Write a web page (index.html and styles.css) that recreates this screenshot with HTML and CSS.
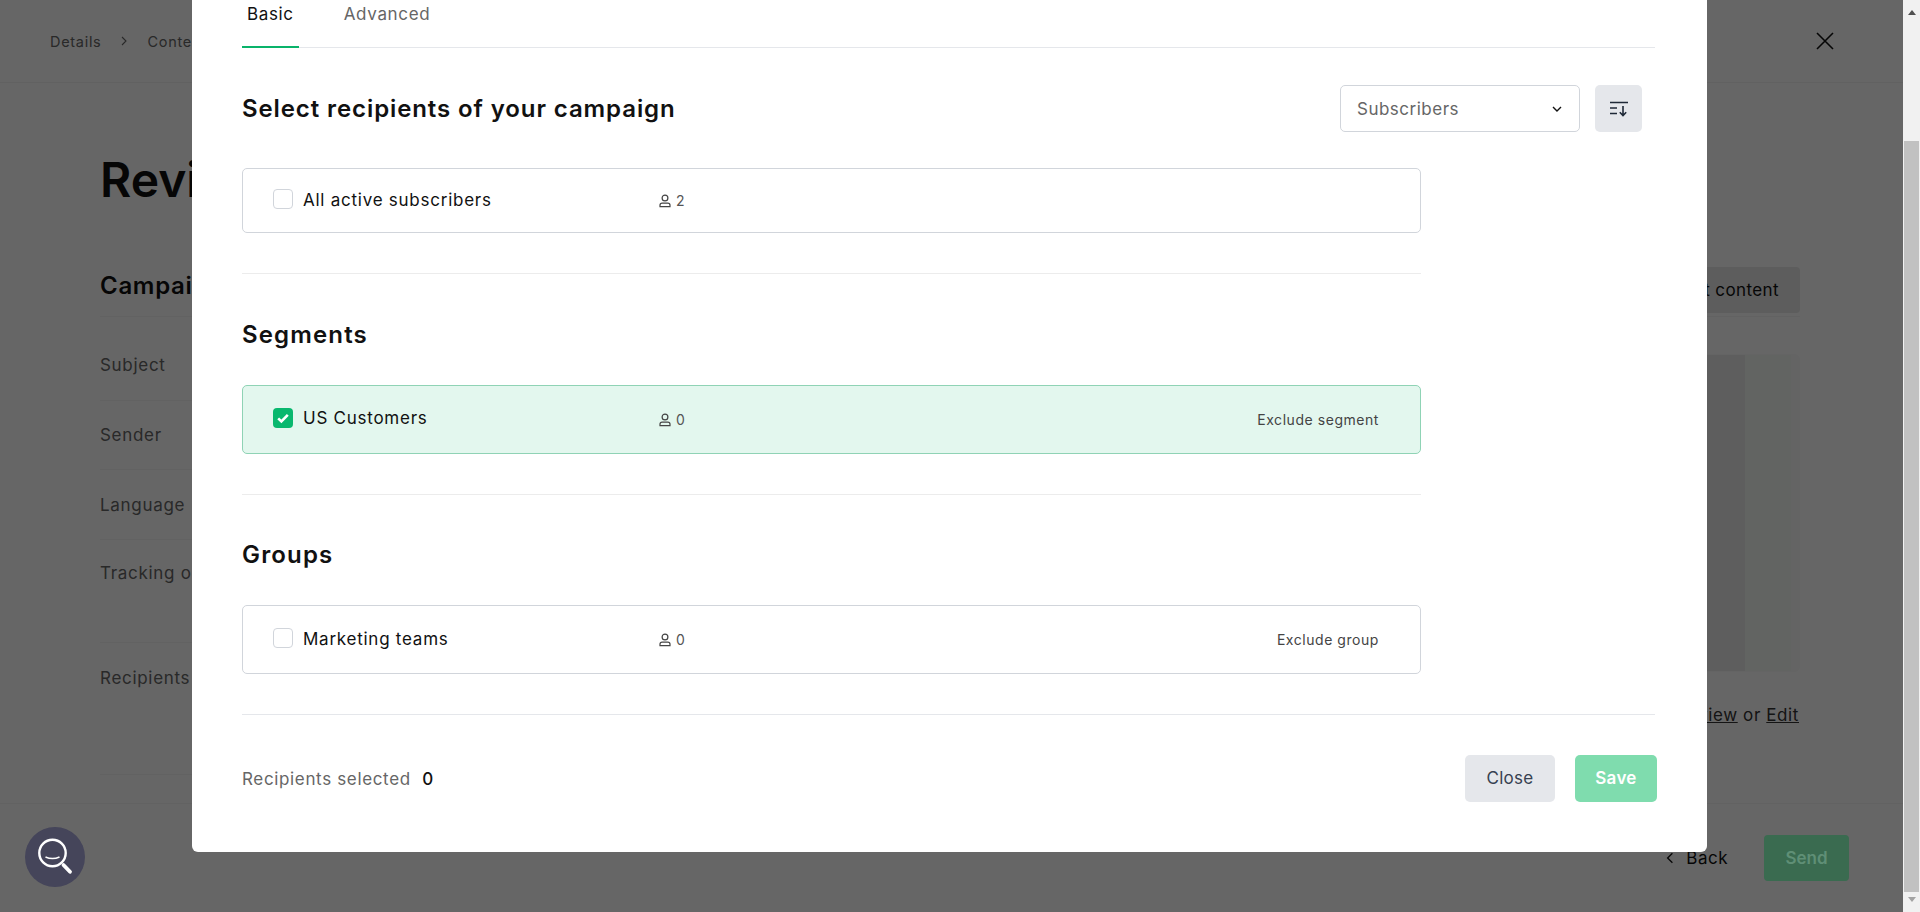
FILE: index.html
```html
<!DOCTYPE html>
<html lang="en">
<head>
<meta charset="utf-8">
<title>Review campaign</title>
<link rel="stylesheet" href="styles.css">
</head>
<body>
<div class="page">
  <header class="topbar">
    <nav class="crumbs"><span>Details</span>
      <svg class="crumb-sep" viewBox="0 0 10 10" width="10" height="10"><path d="M3 1l4 4-4 4" fill="none" stroke="currentColor" stroke-width="1.1"/></svg>
      <span>Content</span></nav>
    <svg class="close-x" viewBox="0 0 20 20" width="20" height="20"><path d="M2 2l16 16M18 2L2 18" fill="none" stroke="#111" stroke-width="1.6"/></svg>
  </header>
  <main class="main">
    <h1 class="title">Review</h1>
    <div class="campaign-head">
      <h2 class="campaign-title">Campaign</h2>
      <span class="edit-btn">Edit content</span>
    </div>
    <div class="review">
      <div class="rows">
        <div class="row r1">Subject</div>
        <div class="row r2">Sender</div>
        <div class="row r3">Language</div>
        <div class="row r4">Tracking options</div>
        <div class="row r5">Recipients</div>
      </div>
      <aside class="preview-col">
        <div class="preview"><div class="pv-a"></div><div class="pv-b"></div></div>
        <p class="preview-links"><u>Preview</u> or <u>Edit</u></p>
      </aside>
    </div>
  </main>
  <footer class="bottombar">
    <span class="back"><svg viewBox="0 0 10 10" width="12" height="12"><path d="M7 1L3 5l4 4" fill="none" stroke="currentColor" stroke-width="1.1"/></svg>Back</span>
    <span class="send">Send</span>
  </footer>
</div>

<div class="scrim"></div>

<section class="modal">
  <div class="tabs">
    <span class="tab active">Basic</span>
    <span class="tab">Advanced</span>
  </div>
  <div class="modal-head">
    <h2 class="modal-title">Select recipients of your campaign</h2>
    <div class="controls">
      <div class="select">Subscribers
        <svg viewBox="0 0 12 12" width="12" height="12"><path d="M2 4l4 4 4-4" fill="none" stroke="#111" stroke-width="1.4"/></svg>
      </div>
      <div class="sort-btn">
        <svg viewBox="0 0 20 16" width="20" height="16"><path d="M1 1.5h18M1 7h7M1 12.5h7" fill="none" stroke="#1f2937" stroke-width="1.6"/><path d="M14 5v9.5M10.8 11.2l3.2 3.3 3.2-3.3" fill="none" stroke="#1f2937" stroke-width="1.6"/></svg>
      </div>
    </div>
  </div>
  <div class="lists">
    <div class="card first">
      <span class="check"></span><span class="name">All active subscribers</span>
      <span class="count"><svg viewBox="0 0 14 14" width="14" height="14"><use href="#person"/></svg>2</span>
    </div>
    <hr class="rule">
    <h3 class="section-title">Segments</h3>
    <div class="card on">
      <span class="check checked"><svg viewBox="0 0 20 20" width="20" height="20"><path d="M5.2 10.3l3.2 3.2 6.4-6.6" fill="none" stroke="#fff" stroke-width="2.6"/></svg></span><span class="name">US Customers</span>
      <span class="count"><svg viewBox="0 0 14 14" width="14" height="14"><use href="#person"/></svg>0</span>
      <span class="exclude">Exclude segment</span>
    </div>
    <hr class="rule">
    <h3 class="section-title groups">Groups</h3>
    <div class="card">
      <span class="check"></span><span class="name">Marketing teams</span>
      <span class="count"><svg viewBox="0 0 14 14" width="14" height="14"><use href="#person"/></svg>0</span>
      <span class="exclude">Exclude group</span>
    </div>
  </div>
  <div class="modal-foot">
    <div class="selected">Recipients selected <b>0</b></div>
    <div class="foot-actions">
      <span class="btn btn-close">Close</span>
      <span class="btn btn-save">Save</span>
    </div>
  </div>
</section>

<div class="chat">
  <svg viewBox="0 0 40 40" width="40" height="40"><circle cx="17.5" cy="16" r="13.2" fill="none" stroke="#fff" stroke-width="2.4"/><path d="M10.5 20c4 1.8 10 1.8 14 0" fill="none" stroke="#fff" stroke-width="1.5"/><path d="M28.5 28l6.5 6.8" stroke="#fff" stroke-width="3.8" stroke-linecap="round"/></svg>
</div>

<div class="scrollbar">
  <span class="arrow up"></span>
  <div class="track"><div class="thumb"></div></div>
  <span class="arrow down"></span>
</div>

<svg class="defs" width="0" height="0"><defs>
  <g id="person" fill="none" stroke="#444" stroke-width="1.2"><circle cx="7" cy="4" r="2.9"/><path d="M2 12.6v-1.4c0-1.2 1-2 2.2-2h5.6c1.2 0 2.2.8 2.2 2v1.4z"/></g>
</defs></svg>
</body>
</html>
```
FILE: styles.css
```css
* { box-sizing: border-box; }
html, body { margin: 0; height: 912px; overflow: hidden; }
body { font-family: Inter, "Liberation Sans", sans-serif; color: #111; background: #fff; position: relative; }
.defs { position: absolute; }

/* page behind the dialog */
.page { width: 1903px; height: 912px; display: flex; flex-direction: column; }
.topbar { height: 83px; flex: none; border-bottom: 1px solid #f3f3f3; display: flex; align-items: center; justify-content: space-between; padding: 0 68px 0 50px; }
.crumbs { display: flex; align-items: center; gap: 18px; font-size: 14.5px; letter-spacing: .7px; color: #666; }
.crumb-sep { color: #666; }
.main { flex: 1; padding: 0 103px 0 100px; }
.title { margin: 69px 0 0; font-size: 48px; line-height: 56px; font-weight: 600; }
.campaign-head { display: flex; justify-content: space-between; align-items: flex-start; height: 56px; margin-top: 53px; border-bottom: 1px solid #f5f5f5; }
.campaign-title { margin: 0; font-size: 24px; line-height: 50px; font-weight: 600; letter-spacing: .7px; }
.edit-btn { height: 46px; line-height: 46px; padding: 0 21px; font-size: 17px; letter-spacing: .4px; background: #e8e8e8; border-radius: 4px; color: #111; margin-top: 6px; }
.review { display: flex; justify-content: space-between; }
.rows { flex: 1; margin-right: 20px; }
.row { font-size: 17px; letter-spacing: .7px; line-height: 20px; color: #666; border-bottom: 1px solid #f5f5f5; }
.r1 { height: 84px; padding-top: 38px; }
.r2 { height: 69px; padding-top: 24px; }
.r3 { height: 70px; padding-top: 25px; }
.r4 { height: 103px; padding-top: 23px; }
.r5 { height: 132px; padding-top: 25px; }
.preview-col { width: 300px; }
.preview { height: 318px; margin-top: 37px; display: flex; justify-content: flex-end; border-radius: 6px; border: 1px solid #fafafa; background: #fafafa; padding-right: 8px; }
.pv-a { width: 120px; background: #ececec; }
.pv-b { width: 46px; background: #f6f9f6; }
.preview-links { margin: 33px 1px 0 0; font-size: 17px; letter-spacing: .6px; text-align: right; color: #333; }
.bottombar { height: 109px; flex: none; border-top: 1px solid #f5f5f5; display: flex; justify-content: flex-end; align-items: center; padding: 0 54px 0 0; gap: 36px; }
.back { display: flex; align-items: center; gap: 10px; font-size: 17px; letter-spacing: .5px; }
.send { width: 85px; height: 46px; line-height: 46px; text-align: center; border-radius: 4px; background: #3a6b50; color: #5f8f76; font-weight: 600; font-size: 17px; position: relative; z-index: 2; }

.scrim { position: absolute; left: 0; top: 0; width: 1903px; height: 912px; background: rgba(0, 0, 0, 0.6); }

/* dialog */
.modal { position: absolute; left: 192px; top: 0; width: 1515px; height: 852px; background: #fff; border-radius: 0 0 6px 6px; padding: 0 50px; z-index: 3; }
.tabs { height: 48px; border-bottom: 1px solid #e5e7eb; display: flex; gap: 40px; margin-right: 2px; }
.tab { height: 48px; padding: 3px 5px 0; font-size: 17px; line-height: 22px; letter-spacing: .65px; color: #666; }
.tab.active { color: #111; border-bottom: 2px solid #09b36a; }
.modal-head { display: flex; justify-content: space-between; align-items: center; margin-top: 37px; padding-right: 15px; }
.modal-title { margin: 0; font-size: 24px; line-height: 47px; font-weight: 600; letter-spacing: .9px; }
.controls { display: flex; gap: 15px; }
.select { width: 240px; height: 47px; border: 1px solid #d1d5db; border-radius: 5px; padding: 0 16px; display: flex; align-items: center; justify-content: space-between; font-size: 17px; letter-spacing: .5px; color: #666; }
.sort-btn { width: 47px; height: 47px; border-radius: 5px; background: #e5e7eb; display: flex; align-items: center; justify-content: center; }
.lists { width: 1179px; margin-top: 36px; }
.card { height: 69px; border: 1px solid #d1d5db; border-radius: 5px; display: flex; align-items: center; padding: 0 41px 3px 30px; position: relative; }
.card.first { height: 65px; }
.card.on { background: #e3f7ee; border-color: #8fd3b5; }
.check { width: 20px; height: 20px; border: 1px solid #d1d5db; border-radius: 4px; flex: none; background: #fff; }
.check.checked { background: #09b86e; border: 0; }
.check svg { display: block; }
.name { font-size: 17px; letter-spacing: .75px; margin-left: 10px; margin-top: 1px; width: 355px; flex: none; }
.card.on .name { margin-top: 0; }
.count { display: flex; align-items: center; gap: 4px; font-size: 14px; color: #555; margin-top: 3px; }
.exclude { margin-left: auto; font-size: 14px; letter-spacing: .55px; color: #444; margin-top: 3px; }
.rule { margin: 40px 0 0; border: 0; border-top: 1px solid #ececec; }
.section-title { margin: 45px 0 34px; font-size: 24px; line-height: 32px; font-weight: 600; letter-spacing: 1.15px; }
.section-title.groups { margin: 44px 0 34px; }
.modal-foot { margin-top: 40px; border-top: 1px solid #e5e7eb; padding-top: 40px; display: flex; justify-content: space-between; align-items: center; margin-right: 2px; }
.selected { font-size: 17px; letter-spacing: .65px; color: #666; }
.selected b { font-weight: 500; color: #111; margin-left: 6px; }
.foot-actions { display: flex; gap: 20px; margin-right: -2px; }
.btn { height: 47px; line-height: 47px; text-align: center; border-radius: 5px; font-size: 17px; letter-spacing: .3px; }
.btn-close { width: 90px; background: #e5e7eb; color: #374151; }
.btn-save { width: 82px; background: #7fdcae; color: #fff; font-weight: 600; }

.chat { position: absolute; left: 25px; top: 827px; width: 60px; height: 60px; border-radius: 50%; background: #45455a; display: flex; align-items: center; justify-content: center; z-index: 3; }

.scrollbar { position: absolute; right: 0; top: 0; width: 17px; height: 912px; background: #f1f1f1; display: flex; flex-direction: column; align-items: center; z-index: 3; }
.arrow { flex: none; width: 0; height: 0; border-left: 4.5px solid transparent; border-right: 4.5px solid transparent; }
.arrow.up { margin: 10px 0 5px; border-bottom: 5px solid #505050; }
.arrow.down { margin: 5px 0 10px; border-top: 5px solid #a3a3a3; }
.track { flex: 1; width: 15px; padding-top: 121px; }
.thumb { height: 100%; background: #c1c1c1; }
```
